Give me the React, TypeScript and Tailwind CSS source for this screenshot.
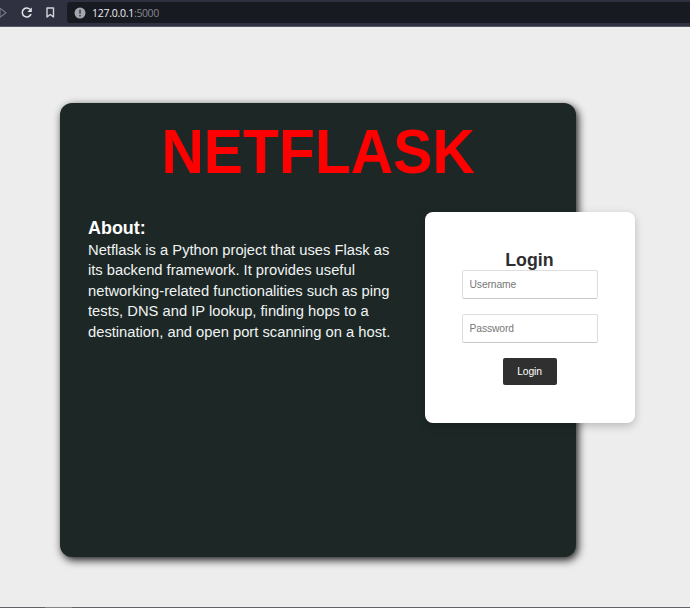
import React from "react";

function BrowserBar() {
  return (
    <header className="flex h-[27px] w-full items-start border-b border-[#55566a] bg-[#2f3140]">
      <svg className="h-[26px] w-[67px] shrink-0" viewBox="0 0 67 26" fill="none">
        <path d="M0 8.2 L6 12.7 L0 17.2 Z" stroke="#777985" strokeWidth="1.1" />
        <path d="M30 9.3 A4.5 4.5 0 1 0 31 14" stroke="#e4e4e8" strokeWidth="1.6" />
        <path d="M31.8 7.5 V12 H27.3 Z" fill="#e4e4e8" />
        <path d="M47 8 H53.5 V17 L50.2 14.5 L47 17 Z" stroke="#d4d4d9" strokeWidth="1.4" strokeLinejoin="round" />
      </svg>
      <div className="mt-[2px] flex h-[21px] flex-1 items-center rounded-l-[3px] bg-[#181a21] pl-[7px]">
        <svg className="h-[12px] w-[12px] shrink-0" viewBox="0 0 12 12">
          <circle cx="6" cy="6" r="5.5" fill="#a3a6ac" />
          <path d="M6 2.8 V6.8 M6 8 V9.4" stroke="#30333a" strokeWidth="1.4" />
        </svg>
        <span className="ml-[6px] font-['Open_Sans','Noto_Sans',sans-serif] text-[10.5px] leading-[20px] text-[#f0f0f3]">
          <span className="font-medium tracking-[-0.25px]">127.0.0.1</span>
          <span className="tracking-[-0.4px] text-[#85878e]">:5000</span>
        </span>
      </div>
    </header>
  );
}

function LoginCard() {
  return (
    <form className="flex h-[211px] w-[210px] shrink-0 flex-col items-center rounded-[8px] bg-white pt-[37px] shadow-[0_3px_8px_rgba(0,0,0,0.22)]">
      <h2 className="scale-x-[0.95] text-[18.7px] leading-[22px] font-bold text-[#2e2e31]">Login</h2>
      <input
        className="-mt-px h-[29px] w-[136px] rounded-[2px] border border-[#dedede] border-b-[#c8c8c8] bg-white px-[7px] text-[10.3px] tracking-[-0.1px] placeholder:text-[#777777]"
        placeholder="Username"
      />
      <input
        type="password"
        className="mt-[15px] h-[29px] w-[136px] rounded-[2px] border border-[#dedede] border-b-[#c8c8c8] bg-white px-[7px] text-[10.3px] tracking-[-0.1px] placeholder:text-[#777777]"
        placeholder="Password"
      />
      <button type="button" className="mt-[15px] h-[27px] w-[54px] rounded-[2px] bg-[#303030] pt-px text-[10.3px] tracking-[-0.12px] text-white">
        Login
      </button>
    </form>
  );
}

export default function App() {
  return (
    <div className="flex h-[608px] w-[690px] flex-col overflow-hidden bg-[#ededed] font-['Liberation_Sans',Arial,sans-serif]">
      <BrowserBar />
      <main className="flex-1 pt-[75.6px] pl-[59.5px]">
        <section className="h-[454.5px] w-[516.4px] rounded-[12px] bg-[#1d2826] shadow-[2px_3px_9px_rgba(0,0,0,0.9)]">
          <h1 className="h-[109px] scale-x-[0.926] pt-[12px] text-center text-[63.5px] leading-[72px] font-bold text-[#ff0000]">
            NETFLASK
          </h1>
          <div className="flex w-[575px] items-start justify-between pl-[28.5px]">
            <div className="pt-[5px] text-[#f0f3f3]">
              <h2 className="origin-left scale-x-[0.96] text-[18.7px] leading-[22px] font-bold text-white">About:</h2>
              <p className="w-[302px] origin-left scale-x-[0.97] pt-px text-[15.2px] leading-[20.6px] whitespace-nowrap">
                Netflask is a Python project that uses Flask as<br />
                its backend framework. It provides useful<br />
                networking-related functionalities such as ping<br />
                tests, DNS and IP lookup, finding hops to a<br />
                destination, and open port scanning on a host.
              </p>
            </div>
            <LoginCard />
          </div>
        </section>
      </main>
      <footer className="h-px bg-[#626067]">
        <div className="ml-[45px] h-px w-[27px] bg-[#858585]" />
      </footer>
    </div>
  );
}
